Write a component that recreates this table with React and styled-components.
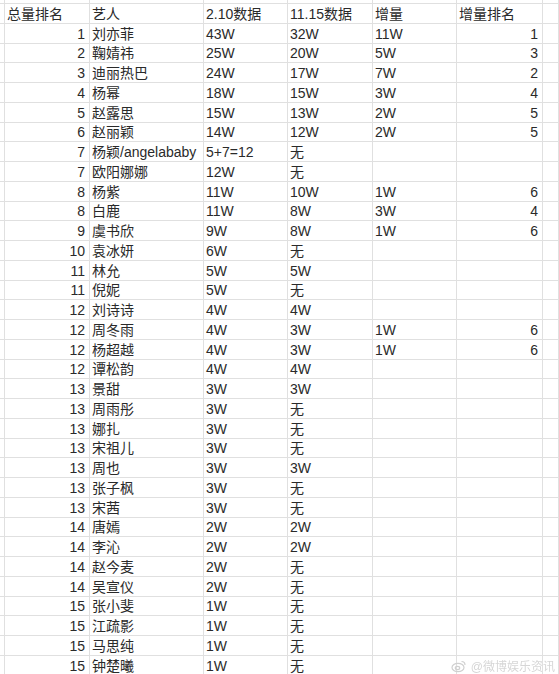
import React from "react";
import styled, { createGlobalStyle } from "styled-components";

const Global = createGlobalStyle`
  html, body { margin: 0; padding: 0; background: #fff; overflow: hidden; }
  body { font-family: "Liberation Sans", "Noto Sans CJK SC", sans-serif; }
`;

const Sheet = styled.div`
  display: grid;
  grid-template-columns: 5px 85px 114px 84px 85px 84px 86px 1fr;
  grid-template-rows: 4px repeat(34, 19.75px);
  width: 559px;
  height: 674px;
  overflow: hidden;
  color: #2a2a2a;
  font-size: 14px;
  position: relative;
`;

const Cell = styled.div`
  box-sizing: border-box;
  border-right: 1px solid #e0e0e0;
  border-bottom: 1px solid #e0e0e0;
  display: flex;
  align-items: center;
  justify-content: ${(p) => (p.$right ? "flex-end" : "flex-start")};
  padding: ${(p) => (p.$right ? "1px 4px 0 0" : "1px 0 0 2px")};
  white-space: nowrap;
  overflow: visible;
  line-height: 1;
`;

const Watermark = styled.div`
  position: absolute;
  right: 4px;
  bottom: 0px;
  display: flex;
  align-items: center;
  gap: 4px;
  color: #d6d6d6;
  font-size: 12px;
  filter: blur(0.6px);
`;

const header = ["总量排名", "艺人", "2.10数据", "11.15数据", "增量", "增量排名"];

const rows = [
  [1, "刘亦菲", "43W", "32W", "11W", 1],
  [2, "鞠婧祎", "25W", "20W", "5W", 3],
  [3, "迪丽热巴", "24W", "17W", "7W", 2],
  [4, "杨幂", "18W", "15W", "3W", 4],
  [5, "赵露思", "15W", "13W", "2W", 5],
  [6, "赵丽颖", "14W", "12W", "2W", 5],
  [7, "杨颖/angelababy", "5+7=12", "无", "", ""],
  [7, "欧阳娜娜", "12W", "无", "", ""],
  [8, "杨紫", "11W", "10W", "1W", 6],
  [8, "白鹿", "11W", "8W", "3W", 4],
  [9, "虞书欣", "9W", "8W", "1W", 6],
  [10, "袁冰妍", "6W", "无", "", ""],
  [11, "林允", "5W", "5W", "", ""],
  [11, "倪妮", "5W", "无", "", ""],
  [12, "刘诗诗", "4W", "4W", "", ""],
  [12, "周冬雨", "4W", "3W", "1W", 6],
  [12, "杨超越", "4W", "3W", "1W", 6],
  [12, "谭松韵", "4W", "4W", "", ""],
  [13, "景甜", "3W", "3W", "", ""],
  [13, "周雨彤", "3W", "无", "", ""],
  [13, "娜扎", "3W", "无", "", ""],
  [13, "宋祖儿", "3W", "无", "", ""],
  [13, "周也", "3W", "3W", "", ""],
  [13, "张子枫", "3W", "无", "", ""],
  [13, "宋茜", "3W", "无", "", ""],
  [14, "唐嫣", "2W", "2W", "", ""],
  [14, "李沁", "2W", "2W", "", ""],
  [14, "赵今麦", "2W", "无", "", ""],
  [14, "吴宣仪", "2W", "无", "", ""],
  [15, "张小斐", "1W", "无", "", ""],
  [15, "江疏影", "1W", "无", "", ""],
  [15, "马思纯", "1W", "无", "", ""],
  [15, "钟楚曦", "1W", "无", "", ""],
];

const WeiboLogo = () => (
  <svg width="16" height="14" viewBox="0 0 16 14" fill="none" stroke="#d0d0d0" strokeWidth="1.2">
    <ellipse cx="7" cy="8.5" rx="6" ry="4.2" />
    <ellipse cx="6.5" cy="9" rx="2.2" ry="1.6" />
    <path d="M10.5 2.5c2 0 3.5 1.5 3.5 3.5" />
  </svg>
);

export default function App() {
  return (
    <>
      <Global />
      <Sheet>
        {Array.from({ length: 8 }).map((_, i) => (
          <Cell key={"top" + i} />
        ))}
        <Cell />
        {header.map((h) => (
          <Cell key={h}>{h}</Cell>
        ))}
        <Cell />
        {rows.map((r, ri) => (
          <React.Fragment key={ri}>
            <Cell />
            <Cell $right>{r[0]}</Cell>
            <Cell>{r[1]}</Cell>
            <Cell>{r[2]}</Cell>
            <Cell>{r[3]}</Cell>
            <Cell>{r[4]}</Cell>
            <Cell $right>{r[5]}</Cell>
            <Cell />
          </React.Fragment>
        ))}
        <Watermark>
          <WeiboLogo />
          <span>@微博娱乐资讯</span>
        </Watermark>
      </Sheet>
    </>
  );
}
